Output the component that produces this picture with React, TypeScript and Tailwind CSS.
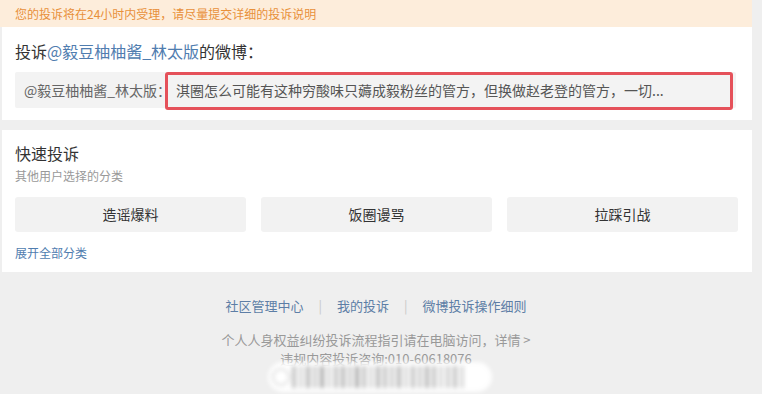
import React from "react";

const font = { fontFamily: '"Noto Sans CJK SC", "Noto Sans", sans-serif' };

export default function App() {
  return (
    <div className="w-[762px] h-[394px] bg-[#efefef] overflow-hidden relative" style={font}>
      <div className="w-[752px]">
        {/* banner */}
        <div className="h-[27px] bg-[#fdeddb] flex items-center pl-[15px] text-[12px] text-[#e8903a]">
          您的投诉将在24小时内受理，请尽量提交详细的投诉说明
        </div>

        {/* card 1 */}
        <div className="bg-white ml-[2px] h-[93px] pl-[13px] pr-[14px] pt-[12px] relative">
          <div className="text-[16px] leading-[24px] text-[#333]">
            投诉<span className="text-[#507daf]">@毅豆柚柚酱_林太版</span>的微博：
          </div>
          <div className="mt-[9px] h-[36px] w-[721px] bg-[#f3f3f3] rounded-[2px] flex items-center pl-[9px] text-[14px] text-[#666] whitespace-nowrap">
            <span>@毅豆柚柚酱_林太版：</span>
            <span className="ml-[5px] text-[#555]">淇圈怎么可能有这种穷酸味只薅成毅粉丝的管方，但换做赵老登的管方，一切...</span>
          </div>
          <div className="absolute left-[163px] top-[45px] w-[568px] h-[38px] border-[3px] border-[#e5515a] rounded-[3px]"></div>
        </div>

        {/* card 2 */}
        <div className="bg-white ml-[2px] mt-[10px] h-[142px] pl-[13px] pr-[14px] pt-[11px]">
          <div className="text-[16px] leading-[24px] text-[#333]">快速投诉</div>
          <div className="text-[12px] leading-[18px] text-[#999] mt-[2px]">其他用户选择的分类</div>
          <div className="grid grid-cols-3 gap-[15px] mt-[12px] w-[723px]">
            {["造谣爆料", "饭圈谩骂", "拉踩引战"].map((t) => (
              <div key={t} className="h-[35px] bg-[#f2f2f2] rounded-[3px] flex items-center justify-center text-[14px] text-[#333]">
                {t}
              </div>
            ))}
          </div>
          <div className="text-[12px] leading-[18px] text-[#507daf] mt-[12px]">展开全部分类</div>
        </div>

        {/* footer */}
        <div className="flex flex-col items-center pt-[25px] text-[13px]">
          <div className="flex items-center leading-[18px] text-[#5d7ea6]">
            <span>社区管理中心</span>
            <span className="mx-[15px] text-[#c8c8c8]">|</span>
            <span>我的投诉</span>
            <span className="mx-[15px] text-[#c8c8c8]">|</span>
            <span>微博投诉操作细则</span>
          </div>
          <div className="mt-[15px] leading-[19px] text-[#999]">个人人身权益纠纷投诉流程指引请在电脑访问，详情 &gt;</div>
          <div className="leading-[19px] text-[#999]">违规内容投诉咨询:010-60618076</div>
        </div>
      </div>

      {/* watermark overlay */}
      <div className="absolute left-[268px] top-[362px] w-[224px] h-[30px] rounded-full bg-white/95 blur-[2px] flex items-center gap-[3px] pl-[24px]">
        <div className="absolute left-[4px] top-[6px] w-[18px] h-[18px] rounded-full border-2 border-[#ddd]"></div>
        {[0.5, 0.3, 0.6, 0.4, 0.7, 0.3, 0.5, 0.6, 0.4, 0.7, 0.5, 0.3, 0.6, 0.5, 0.4, 0.6, 0.3, 0.5, 0.4, 0.6, 0.5, 0.3, 0.4, 0.5, 0.3].map((o, i) => (
          <div key={i} className="w-[4px] h-[22px] bg-[#888]" style={{ opacity: o }}></div>
        ))}
      </div>
    </div>
  );
}
